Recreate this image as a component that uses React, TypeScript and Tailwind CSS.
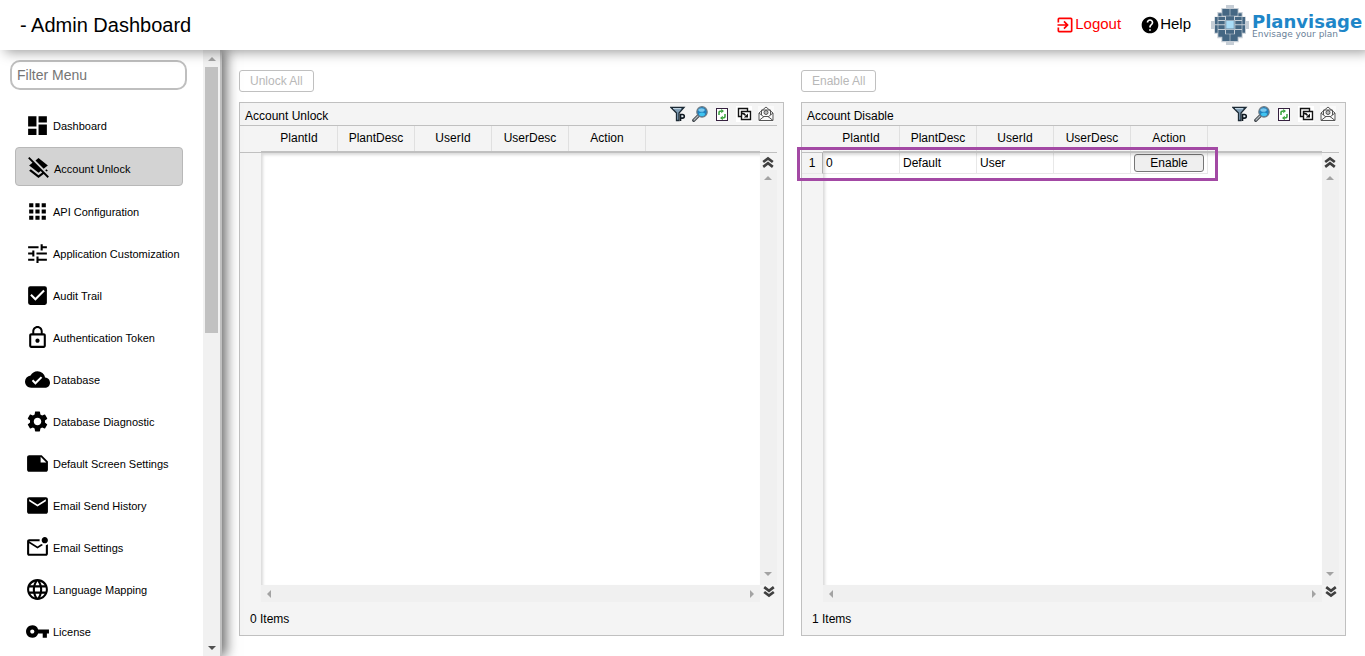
import type { ReactNode } from "react";
import type { IconType } from "react-icons";
import {
  MdApps,
  MdCheckBox,
  MdCloudDone,
  MdDashboard,
  MdEmail,
  MdExitToApp,
  MdHelp,
  MdLanguage,
  MdLayersClear,
  MdLockOutline,
  MdNote,
  MdOutlineMarkEmailUnread,
  MdSettings,
  MdTune,
  MdVpnKey,
} from "react-icons/md";

const menu: { label: string; icon: IconType; active?: boolean }[] = [
  { label: "Dashboard", icon: MdDashboard },
  { label: "Account Unlock", icon: MdLayersClear, active: true },
  { label: "API Configuration", icon: MdApps },
  { label: "Application Customization", icon: MdTune },
  { label: "Audit Trail", icon: MdCheckBox },
  { label: "Authentication Token", icon: MdLockOutline },
  { label: "Database", icon: MdCloudDone },
  { label: "Database Diagnostic", icon: MdSettings },
  { label: "Default Screen Settings", icon: MdNote },
  { label: "Email Send History", icon: MdEmail },
  { label: "Email Settings", icon: MdOutlineMarkEmailUnread },
  { label: "Language Mapping", icon: MdLanguage },
  { label: "License", icon: MdVpnKey },
];

const columns = ["PlantId", "PlantDesc", "UserId", "UserDesc", "Action"];

function LogoMark() {
  return (
    <svg width="38" height="40" viewBox="0 0 114 120" aria-hidden="true">
      <path
        fill="#c6ced6"
        d="M45 0h24v9h14v12h12v14h10v13h9v24h-9v14H95v14H83v12H69v8H45v-8H31v-12H19V86H10V72H0V48h10V35h9V21h12V9h14z"
      />
      <path
        fill="#456783"
        d="M34 12h22v20H34zM58 12h22v20H58zM22 25h10v9H22zM82 25h10v9H82zM22 36h20v9H22zM72 36h20v9H72zM45 34h24v11H45zM12 36h8v22h-8zM94 36h8v22h-8zM12 61h8v22h-8zM94 61h8v22h-8zM22 48h19v10H22zM73 48h19v10H73zM22 61h19v11H22zM73 61h19v11H73zM22 75h20v20H22zM72 75h20v20H72zM45 75h24v11H45zM34 88h22v20H34zM58 88h22v20H58z"
      />
      <path fill="#7d9cb4" d="M43 46h28v27H43z" />
      <path fill="#a9dcf7" d="M46 48h22v22H46z" />
    </svg>
  );
}

function FilterIcon() {
  return (
    <svg width="16" height="16" viewBox="0 0 16 16" aria-hidden="true">
      <path d="M1 1.500h13l-5 5.500v7.500H6.500V7z" fill="#7f9db5" stroke="#1c2a35" strokeWidth="1.300" />
      <path d="M3 2.600h8" stroke="#c9dbe8" strokeWidth="1" />
      <path d="M10.500 15V8.500h2a1.800 1.800 0 0 1 0 3.600h-2" fill="#e8f1f7" stroke="#101820" strokeWidth="1.600" />
    </svg>
  );
}

function SearchIcon() {
  return (
    <svg width="16" height="16" viewBox="0 0 16 16" aria-hidden="true">
      <path d="M1.700 14.300l5-5" stroke="#3d4348" strokeWidth="3.200" strokeLinecap="round" />
      <path d="M2 14l4-4" stroke="#b4bbc0" strokeWidth="1.200" strokeLinecap="round" />
      <circle cx="10" cy="5.900" r="5.200" fill="#2080bd" stroke="#6d7a84" strokeWidth="1.200" />
      <ellipse cx="9.500" cy="4" rx="3.200" ry="1.800" fill="#7cc9ee" />
      <ellipse cx="10" cy="8.200" rx="3" ry="1.800" fill="#40c4f0" />
    </svg>
  );
}

function RefreshIcon() {
  return (
    <svg width="16" height="16" viewBox="0 0 16 16" aria-hidden="true">
      <rect x="2.500" y="2.500" width="11" height="12" fill="#fff" stroke="#35203f" />
      <path d="M5 9V6.500Q5 5 7.500 5M11 8v2.500q0 1.500-2.500 1.500" fill="none" stroke="#39a33c" strokeWidth="1.500" />
      <path d="M7.200 2.900 10 5 7.200 7.200zM8.800 9.800 6 12l2.800 2.200z" fill="#39a33c" />
    </svg>
  );
}

function ExportIcon() {
  return (
    <svg width="16" height="16" viewBox="0 0 16 16" aria-hidden="true">
      <path d="M0 0h16v16H0z" fill="#fff" />
      <path d="M5 10.500H2.500v-8h9V5" fill="none" stroke="#111" strokeWidth="1.400" />
      <path d="M5.500 5.500h9v8h-9z" fill="#fff" stroke="#111" strokeWidth="1.400" />
      <path d="M5 7.500q3.500-.5 4.500 2" fill="none" stroke="#111" strokeWidth="1.600" />
      <path d="M12 7.500V11.500H7.800z" fill="#111" />
    </svg>
  );
}

function MailIcon() {
  return (
    <svg width="16" height="16" viewBox="0 0 16 16" aria-hidden="true">
      <path d="M0 0h16v16H0z" fill="#fafafa" />
      <g fill="none" stroke="#555" strokeWidth="1">
        <path d="M1 7v7.500h14V7L8 1z" />
        <path d="M3.500 9V4h9v5M1 7l5 4M15 7l-5 4M1 14.500 6 10.500h4l5 4" />
        <circle cx="8" cy="6.500" r="2" fill="#bbb" />
      </g>
    </svg>
  );
}

const tools: { label: string; icon: ReactNode }[] = [
  { label: "Filter", icon: <FilterIcon /> },
  { label: "Search", icon: <SearchIcon /> },
  { label: "Refresh", icon: <RefreshIcon /> },
  { label: "Export", icon: <ExportIcon /> },
  { label: "Mail", icon: <MailIcon /> },
];

function Triangle({ className = "" }: { className?: string }) {
  return (
    <svg width="8" height="4" viewBox="0 0 8 4" className={className} aria-hidden="true">
      <path d="M4 0l4 4H0z" fill="currentColor" />
    </svg>
  );
}

function DoubleChevron({ className = "" }: { className?: string }) {
  return (
    <svg width="12" height="12" viewBox="0 0 12 12" className={className} aria-hidden="true">
      <path d="M1.200 6 6 2.400 10.800 6M1.200 10.800 6 7.200l4.800 3.600" fill="none" stroke="#404040" strokeWidth="2.700" />
    </svg>
  );
}

type Row = { plantId: string; plantDesc: string; userId: string; userDesc: string; action: string };

function GridPanel({
  title,
  bulkLabel,
  rows,
  highlight,
}: {
  title: string;
  bulkLabel: string;
  rows: Row[];
  highlight?: boolean;
}) {
  const cell = "h-[21px] border-r border-b border-[#e8e8e8] px-[3px]";
  return (
    <section className="flex min-w-0 flex-1 flex-col items-start gap-[10px]">
      <button
        type="button"
        disabled
        className="h-[22px] rounded-[3px] border border-[#c0c0c0] bg-white px-[10px] text-xs leading-none text-[#b8b8b8]"
      >
        {bulkLabel}
      </button>
      <div className="relative flex w-full flex-1 flex-col border border-[#c0c0c0] bg-[#f4f4f4]">
        <div className="mr-[6px] flex h-[23px] items-center justify-between border-b border-[#c0c0c0] pr-[3px] pl-[5px]">
          <h2 className="pt-[4px] text-xs">{title}</h2>
          <div className="flex gap-[6px]">
            {tools.map((tool) => (
              <button key={tool.label} type="button" aria-label={tool.label} className="size-4">
                {tool.icon}
              </button>
            ))}
          </div>
        </div>

        <div className="mr-[6px] flex min-h-0 flex-1">
          <div className="relative flex-1">
            <table className="h-full w-full table-fixed border-separate border-spacing-0 text-xs">
              <colgroup>
                <col className="w-[21px]" />
                {columns.map((name) => (
                  <col key={name} className="w-[77px]" />
                ))}
                <col />
              </colgroup>
              <thead>
                <tr className="h-[27px]">
                  <td className="border-b border-[#c0c0c0]" />
                  {columns.map((name) => (
                    <th key={name} className="border-r border-[#e0e0e0] pb-[3px] font-normal">
                      {name}
                    </th>
                  ))}
                  <td />
                </tr>
              </thead>
              <tbody>
                {rows.map((row, index) => (
                  <tr key={row.userId} className="h-[21px] bg-white">
                    <th className="border-r border-b border-r-[#b0b0b0] border-b-[#e8e8e8] bg-[#f4f4f4] font-normal">
                      {index + 1}
                    </th>
                    <td className={cell}>{row.plantId}</td>
                    <td className={cell}>{row.plantDesc}</td>
                    <td className={cell}>{row.userId}</td>
                    <td className={cell}>{row.userDesc}</td>
                    <td className={cell}>
                      <button
                        type="button"
                        className="block h-[18px] w-[70px] rounded-[3px] border border-[#767676] bg-[#efefef] leading-none"
                      >
                        {row.action}
                      </button>
                    </td>
                    <td />
                  </tr>
                ))}
                <tr>
                  <td />
                  <td colSpan={6} className="bg-white" />
                </tr>
              </tbody>
            </table>
            <div className="pointer-events-none absolute top-[25px] right-0 bottom-0 left-[21px] border-t-2 border-[#c0c0c0] shadow-[inset_2px_2px_3px_rgba(0,0,0,0.15)]" />
          </div>
          <div className="flex w-[17px] flex-col items-center pt-[26px]">
            <div className="flex h-[18px] w-full items-center justify-center border-t border-[#c0c0c0] pr-px">
              <DoubleChevron />
            </div>
            <div className="flex w-full flex-1 flex-col items-center justify-between bg-[#f0f0f0] pt-[6px] pr-px pb-[9px] text-[#a3a3a3]">
              <Triangle />
              <Triangle className="rotate-180" />
            </div>
          </div>
        </div>

        <div className="mr-[6px] flex h-[17px] pl-[21px]">
          <div className="flex flex-1 items-center justify-between bg-[#f0f0f0] px-1 text-[#a3a3a3]">
            <Triangle className="-rotate-90" />
            <Triangle className="rotate-90" />
          </div>
          <div className="flex w-[17px] justify-center pt-px">
            <DoubleChevron className="rotate-180" />
          </div>
        </div>
        <p className="h-[33px] pt-[9px] pl-[10px] text-xs">{rows.length} Items</p>

        {highlight && (
          <div className="pointer-events-none absolute top-[44px] -left-[5px] h-[34px] w-[421px] border-3 border-[#a349a4]" />
        )}
      </div>
    </section>
  );
}

export default function App() {
  return (
    <div className="flex h-screen flex-col overflow-hidden bg-white font-['Liberation_Sans',Arial,sans-serif] text-black">
      <header className="relative z-20 flex h-[50px] shrink-0 items-center justify-between bg-white pr-[3px] pl-5 shadow-[5px_2px_12px_rgba(0,0,0,0.4)]">
        <h1 className="text-xl">- Admin Dashboard</h1>
        <div className="flex items-center text-[15px]">
          <a href="#logout" className="mr-[19px] flex items-center text-[#ff0000]">
            <MdExitToApp size={20} />
            <span className="pb-[2px]">Logout</span>
          </a>
          <a href="#help" className="mr-5 flex items-center">
            <MdHelp size={20} />
            <span className="pb-[2px]">Help</span>
          </a>
          <div className="flex items-center gap-[3px]">
            <LogoMark />
            <div className="flex w-[110px] flex-col pt-[2px] font-['DejaVu_Sans',sans-serif]">
              <span className="text-[18px] leading-[16px] font-bold text-[#1e86c8]">Planvisage</span>
              <span className="text-[9px] leading-[8px] whitespace-nowrap text-[#6b8299]">Envisage your plan</span>
            </div>
          </div>
        </div>
      </header>

      <div className="flex min-h-0 flex-1">
        <aside className="relative z-10 flex w-[222px] shrink-0 border-r-2 border-[#c0c0c0] bg-white shadow-[4px_0_12px_rgba(0,0,0,0.6)]">
          <div className="flex-1 overflow-hidden pt-[10px]">
            <input
              type="text"
              aria-label="Filter Menu"
              placeholder="Filter Menu"
              className="mr-4 ml-[10px] block h-[30px] w-[177px] rounded-[10px] border-2 border-[#bfbfbf] px-[5px] text-sm placeholder:text-[#757575]"
            />
            <nav className="mt-[15px] mr-5 ml-[15px]">
              <ul>
                {menu.map(({ label, icon: Icon, active }) => (
                  <li key={label}>
                    <a
                      href="#menu"
                      aria-current={active ? "page" : undefined}
                      className={
                        active
                          ? "mb-[5px] flex h-[39px] items-center gap-[3px] rounded-[4px] border border-[#b8b8b8] bg-[#d3d3d3] pt-[5px] pl-[10px] text-[11px]"
                          : "flex h-[42px] items-center gap-[3px] pl-[10px] text-[11px]"
                      }
                    >
                      <Icon size={25} className="mb-[2px] shrink-0" />
                      <span className="whitespace-nowrap">{label}</span>
                    </a>
                  </li>
                ))}
              </ul>
            </nav>
          </div>
          <div className="flex w-[17px] flex-col items-center bg-[#f1f1f1] pt-[7px] pb-[6px]">
            <Triangle className="shrink-0 text-[#a3a3a3]" />
            <div className="mt-[6px] flex w-[13px] flex-1 flex-col">
              <div className="h-[46%] bg-[#c1c1c1]" />
            </div>
            <Triangle className="shrink-0 rotate-180 text-[#505050]" />
          </div>
        </aside>

        <main className="flex min-w-0 flex-1 gap-[17px] pt-5 pr-[19px] pb-5 pl-[17px]">
          <GridPanel title="Account Unlock" bulkLabel="Unlock All" rows={[]} />
          <GridPanel
            title="Account Disable"
            bulkLabel="Enable All"
            rows={[{ plantId: "0", plantDesc: "Default", userId: "User", userDesc: "", action: "Enable" }]}
            highlight
          />
        </main>
      </div>
    </div>
  );
}
